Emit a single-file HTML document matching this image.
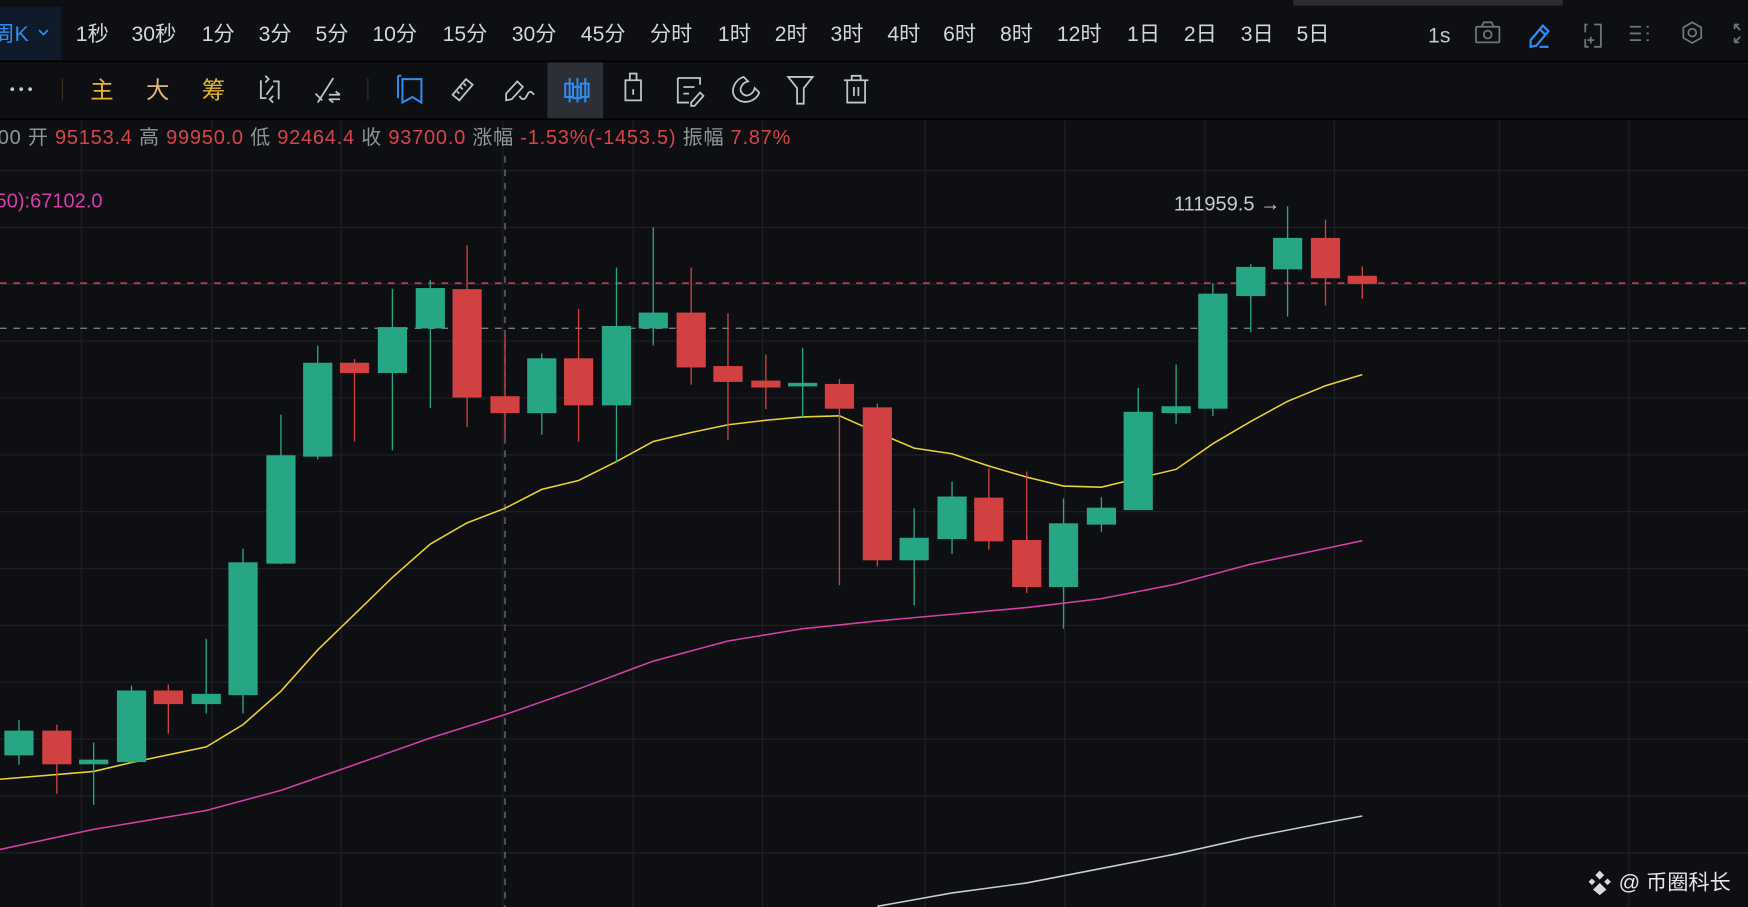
<!DOCTYPE html>
<html><head><meta charset="utf-8"><style>
html,body{margin:0;padding:0;background:#0e0f12;width:1748px;height:907px;overflow:hidden}
svg{display:block}
text{font-family:"Liberation Sans","Noto Sans CJK SC",sans-serif}
</style></head><body>
<svg width="1748" height="907" viewBox="0 0 1568 813.6" xmlns="http://www.w3.org/2000/svg">
<rect width="1568" height="814" fill="#0e0f12"/>
<rect x="1160" y="0" width="242" height="5" fill="#2a2c31"/>
<rect x="0" y="6" width="55" height="48" fill="#0f1b2a"/>
<text x="-6" y="37" font-size="19" fill="#2f8cf0">周K</text>
<path d="M35 27 l4 4 l4 -4" stroke="#2f8cf0" stroke-width="1.5" fill="none"/>
<g font-size="19" fill="#d3d6dc">
<text x="68" y="37">1秒</text><text x="118" y="37">30秒</text><text x="181" y="37">1分</text><text x="232" y="37">3分</text><text x="283" y="37">5分</text><text x="334" y="37">10分</text><text x="397" y="37">15分</text><text x="459" y="37">30分</text><text x="521" y="37">45分</text><text x="583" y="37">分时</text><text x="644" y="37">1时</text><text x="695" y="37">2时</text><text x="745" y="37">3时</text><text x="796" y="37">4时</text><text x="846" y="37">6时</text><text x="897" y="37">8时</text><text x="948" y="37">12时</text><text x="1011" y="37">1日</text><text x="1062" y="37">2日</text><text x="1113" y="37">3日</text><text x="1163" y="37">5日</text>
<text x="1281" y="38" fill="#c3c7cf">1s</text>
</g>
<g stroke="#6f747d" stroke-width="1.6" fill="none">
<rect x="1324" y="24" width="21" height="14" rx="1"/><path d="M1329 24 l2 -4 h7 l2 4"/><circle cx="1334.5" cy="31" r="3.5"/>
<path d="M1430 22 h6 v20 h-6 M1424 22 h-2 v7 M1422 35 v7 h3" /><path d="M1424 36 h6 M1427 33 v6"/>
<path d="M1462 24 h10 M1462 30 h10 M1462 36 h10 M1477 24 h2 M1477 30 h2 M1477 36 h2"/>
<path d="M1518 20 l8 4.6 v9.4 l-8 4.6 l-8 -4.6 v-9.4 z"/><circle cx="1518" cy="29.3" r="3.5"/>
<path d="M1556 22 l5 5 M1556 22 v4 M1556 22 h4 M1556 38 l5 -5 M1556 38 v-4 M1556 38 h4"/>
</g>
<g stroke="#2f8cf0" stroke-width="2" fill="none"><path d="M1373 42 v-6 l11 -13 l5 5 l-11 13 z M1381 26 l5 5"/><path d="M1381 42 h8"/></g>
<line x1="0" y1="55" x2="1568" y2="55" stroke="#000" stroke-width="1.5"/>
<circle cx="11" cy="80" r="1.7" fill="#c3c7cf"/><circle cx="19" cy="80" r="1.7" fill="#c3c7cf"/><circle cx="27" cy="80" r="1.7" fill="#c3c7cf"/>
<line x1="56" y1="70" x2="56" y2="90" stroke="#3a3020" stroke-width="1"/>
<g font-size="21" fill="#e4b62b"><text x="81" y="88">主</text><text x="131" y="88" fill="#e2b57a">大</text><text x="181" y="88">筹</text></g>
<line x1="330" y1="70" x2="330" y2="90" stroke="#1e3a2a" stroke-width="1"/>
<rect x="491" y="56" width="50" height="50" fill="#2c2f36"/>
<g stroke="#bfc3cb" stroke-width="1.6" fill="none">
<path d="M234 72 v16 h5 M250 89 v-16 h-5 M238 68 l3 3 l-3 3 M245 92 l-3 -3 l3 -3 M239 85 l6 -8"/>
<path d="M285 92 l14 -22 M283 84 l6 6 M295 85 h10 M295 89 h10 M301 82 l4 3 M299 92 l-4 -3"/>
<path d="M406 85 l12 -14 l6 5 l-12 14 z M410 82 l2 2 M413 78 l2 2 M416 75 l2 2"/>
<path d="M454 90 v-6 l10 -11 l5 5 l-10 11 z M466 86 c2 4 5 4 7 -1 c2 -4 4 -3 6 0"/>
<path d="M561 90 v-18 h14 v18 z M565 72 v-6 h6 v6 M568 80 v5"/>
<path d="M608 70 h20 v6 M608 70 v22 h10 M613 78 h10 M613 84 h5 M620 92 l8 -9 l3 3 l-8 9 h-3 z"/>
<path d="M660 88 c-6 -7 0 -17 7 -19 l4 4 c-5 1 -9 7 -5 11 c4 4 10 0 11 -5 l4 4 c-2 7 -13 12 -21 5 z"/>
<path d="M707 69 h22 l-8 10 v14 h-6 v-14 z"/>
<path d="M757 72 h22 M764 72 v-4 h8 v4 M760 72 v20 h16 v-20 M766 78 v8 M770 78 v8"/>
</g>
<g stroke="#2f8cf0" stroke-width="1.8" fill="none">
<path d="M357 68 h3 M361 71 h17 v21 l-8 -5 l-9 5 z M357 68 v20"/>
<path d="M511 70 v22 M525 70 v22 M518 70 v22"/><rect x="507" y="75" width="7" height="12"/><rect x="514" y="78" width="7" height="10"/><rect x="521" y="75" width="7" height="12"/>
</g>
<line x1="0" y1="107" x2="1568" y2="107" stroke="#000" stroke-width="1.5"/>
<g stroke="#1d1f24" stroke-width="1.2">
<line x1="0" y1="153" x2="1568" y2="153"/><line x1="0" y1="204" x2="1568" y2="204"/><line x1="0" y1="255" x2="1568" y2="255"/><line x1="0" y1="306" x2="1568" y2="306"/><line x1="0" y1="357" x2="1568" y2="357"/><line x1="0" y1="408" x2="1568" y2="408"/><line x1="0" y1="459" x2="1568" y2="459"/><line x1="0" y1="510" x2="1568" y2="510"/><line x1="0" y1="561" x2="1568" y2="561"/><line x1="0" y1="612" x2="1568" y2="612"/><line x1="0" y1="663" x2="1568" y2="663"/><line x1="0" y1="714" x2="1568" y2="714"/><line x1="0" y1="765" x2="1568" y2="765"/>
<line x1="73" y1="108" x2="73" y2="814"/><line x1="190" y1="108" x2="190" y2="814"/><line x1="306" y1="108" x2="306" y2="814"/><line x1="451" y1="108" x2="451" y2="814"/><line x1="568" y1="108" x2="568" y2="814"/><line x1="684" y1="108" x2="684" y2="814"/><line x1="830" y1="108" x2="830" y2="814"/><line x1="955" y1="108" x2="955" y2="814"/><line x1="1081" y1="108" x2="1081" y2="814"/><line x1="1197" y1="108" x2="1197" y2="814"/><line x1="1345" y1="108" x2="1345" y2="814"/><line x1="1461" y1="108" x2="1461" y2="814"/>
</g>
<text x="-2" y="129" font-size="18" fill="#8f949c" textLength="711" lengthAdjust="spacing">00 开 <tspan fill="#d5444a">95153.4</tspan> 高 <tspan fill="#d5444a">99950.0</tspan> 低 <tspan fill="#d5444a">92464.4</tspan> 收 <tspan fill="#d5444a">93700.0</tspan> 涨幅 <tspan fill="#d5444a">-1.53%(-1453.5)</tspan> 振幅 <tspan fill="#d5444a">7.87%</tspan></text>
<text x="-4" y="186" font-size="18" fill="#d63ea8">50):67102.0</text>
<text x="1053" y="189" font-size="18" fill="#c6cad1">111959.5 →</text>
<line x1="0" y1="254" x2="1568" y2="254" stroke="#d5444a" stroke-width="1.3" stroke-dasharray="6 6"/>
<line x1="0" y1="294.5" x2="1568" y2="294.5" stroke="#767b84" stroke-width="1.3" stroke-dasharray="6 6"/>
<line x1="453" y1="140" x2="453" y2="814" stroke="#6a6f78" stroke-width="1.2" stroke-dasharray="6 6"/>
<polyline fill="none" stroke="#e8d230" stroke-width="1.4" points="0,699 84,692 118,684 185,670 218,650 252,620 285,583 318,551 352,518 386,488 419,469 453,456 486,439 519,431 553,414 586,396 620,388 653,381 687,377 720,374 753,373 787,388 820,402 854,407 887,418 921,428 954,436 988,437 1021,429 1055,421 1088,398 1122,378 1155,360 1189,346 1222,336"/>
<polyline fill="none" stroke="#d63ea8" stroke-width="1.4" points="0,762 84,744 185,727 252,709 318,686 386,662 453,641 519,618 586,593 653,575 720,564 787,557 854,551 921,545 988,537 1055,524 1122,506 1189,492 1222,485"/>
<polyline fill="none" stroke="#c9ccd2" stroke-width="1.4" points="787,813 854,801 921,792 988,779 1055,766 1122,751 1189,738 1222,732"/>
<g fill="#26a684" stroke="#26a684" stroke-width="1.2">
<line x1="17" y1="646" x2="17" y2="686"/><rect x="4.5" y="656" width="25" height="21"/>
<line x1="84" y1="666" x2="84" y2="722"/><rect x="71.5" y="682" width="25" height="3"/>
<line x1="118" y1="615" x2="118" y2="685"/><rect x="105.5" y="620" width="25" height="63"/>
<line x1="185" y1="573" x2="185" y2="640"/><rect x="172.5" y="623" width="25" height="8"/>
<line x1="218" y1="492" x2="218" y2="640"/><rect x="205.5" y="505" width="25" height="118"/>
<line x1="252" y1="372" x2="252" y2="506"/><rect x="239.5" y="409" width="25" height="96"/>
<line x1="285" y1="310" x2="285" y2="412"/><rect x="272.5" y="326" width="25" height="83"/>
<line x1="352" y1="259" x2="352" y2="404"/><rect x="339.5" y="294" width="25" height="40"/>
<line x1="386" y1="251" x2="386" y2="366"/><rect x="373.5" y="259" width="25" height="35"/>
<line x1="486" y1="317" x2="486" y2="390"/><rect x="473.5" y="322" width="25" height="48"/>
<line x1="553" y1="240" x2="553" y2="415"/><rect x="540.5" y="293" width="25" height="70"/>
<line x1="586" y1="204" x2="586" y2="310"/><rect x="573.5" y="281" width="25" height="13"/>
<line x1="720" y1="312" x2="720" y2="374"/><rect x="707.5" y="344" width="25" height="2"/>
<line x1="820" y1="456" x2="820" y2="543"/><rect x="807.5" y="483" width="25" height="19"/>
<line x1="854" y1="432" x2="854" y2="497"/><rect x="841.5" y="446" width="25" height="37"/>
<line x1="954" y1="447" x2="954" y2="564"/><rect x="941.5" y="470" width="25" height="56"/>
<line x1="988" y1="446" x2="988" y2="477"/><rect x="975.5" y="456" width="25" height="14"/>
<line x1="1021" y1="348" x2="1021" y2="457"/><rect x="1008.5" y="370" width="25" height="87"/>
<line x1="1055" y1="327" x2="1055" y2="380"/><rect x="1042.5" y="365" width="25" height="5"/>
<line x1="1088" y1="254" x2="1088" y2="373"/><rect x="1075.5" y="264" width="25" height="102"/>
<line x1="1122" y1="237" x2="1122" y2="298"/><rect x="1109.5" y="240" width="25" height="25"/>
<line x1="1155" y1="185" x2="1155" y2="284"/><rect x="1142.5" y="214" width="25" height="27"/>
</g>
<g fill="#d24142" stroke="#d24142" stroke-width="1.2">
<line x1="51" y1="650" x2="51" y2="712"/><rect x="38.5" y="656" width="25" height="29"/>
<line x1="151" y1="614" x2="151" y2="658"/><rect x="138.5" y="620" width="25" height="11"/>
<line x1="318" y1="322" x2="318" y2="396"/><rect x="305.5" y="326" width="25" height="8"/>
<line x1="419" y1="220" x2="419" y2="383"/><rect x="406.5" y="260" width="25" height="96"/>
<line x1="453" y1="300" x2="453" y2="392"/><rect x="440.5" y="356" width="25" height="14"/>
<line x1="519" y1="277" x2="519" y2="396"/><rect x="506.5" y="322" width="25" height="41"/>
<line x1="620" y1="240" x2="620" y2="345"/><rect x="607.5" y="281" width="25" height="48"/>
<line x1="653" y1="281" x2="653" y2="395"/><rect x="640.5" y="329" width="25" height="13"/>
<line x1="687" y1="318" x2="687" y2="367"/><rect x="674.5" y="342" width="25" height="5"/>
<line x1="753" y1="340" x2="753" y2="525"/><rect x="740.5" y="345" width="25" height="21"/>
<line x1="787" y1="362" x2="787" y2="508"/><rect x="774.5" y="366" width="25" height="136"/>
<line x1="887" y1="420" x2="887" y2="493"/><rect x="874.5" y="447" width="25" height="38"/>
<line x1="921" y1="423" x2="921" y2="532"/><rect x="908.5" y="485" width="25" height="41"/>
<line x1="1189" y1="197" x2="1189" y2="274"/><rect x="1176.5" y="214" width="25" height="35"/>
<line x1="1222" y1="239" x2="1222" y2="268"/><rect x="1209.5" y="248" width="25" height="6"/>
</g>
<g fill="#d8dade"><path d="M1435 781 l4 4 l-4 4 l-4 -4 z M1428 788 l3 3 l-3 3 l-3 -3 z M1442 788 l3 3 l-3 3 l-3 -3 z M1435 792 l6 6 l-6 5 l-6 -5 z" /></g>
<text x="1452" y="798" font-size="19" fill="#e4e6ea">@ 币圈科长</text>
</svg>
</body></html>
